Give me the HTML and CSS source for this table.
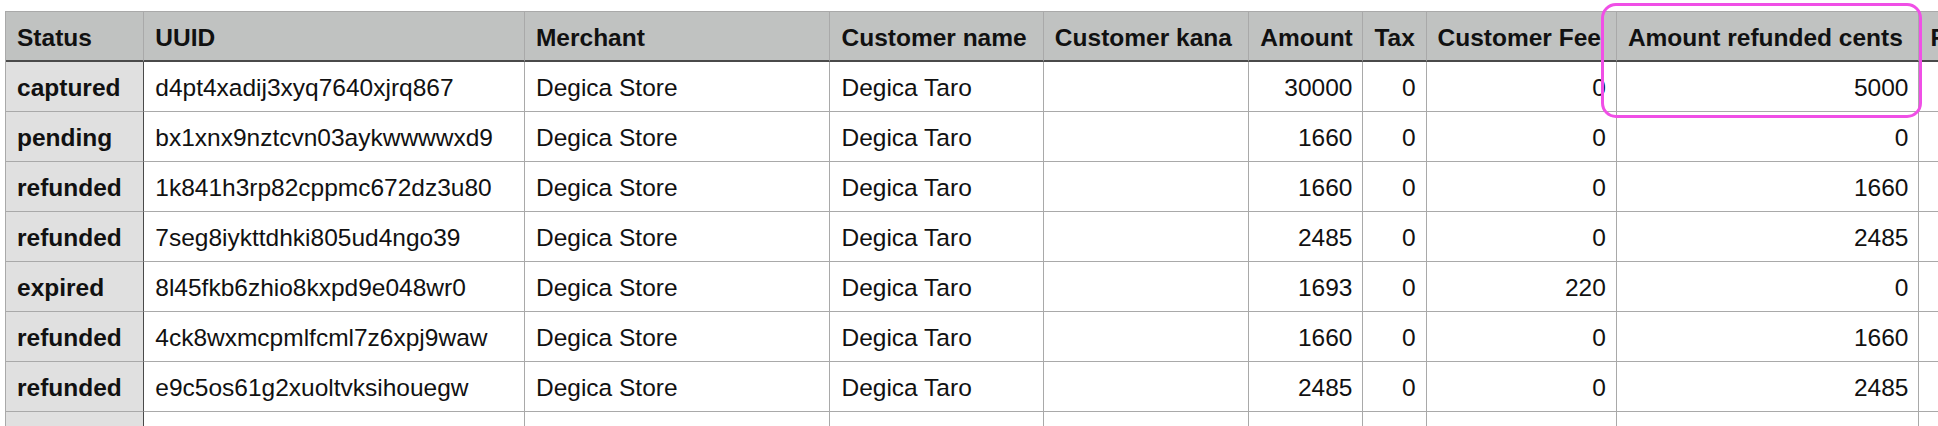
FILE: index.html
```html
<!DOCTYPE html>
<html>
<head>
<meta charset="utf-8">
<link rel="stylesheet" href="styles.css">
</head>
<body>
<div class="sheet">
  <table class="grid">
    <colgroup>
      <col class="c-status"><col class="c-uuid"><col class="c-merchant"><col class="c-cname"><col class="c-ckana"><col class="c-amount"><col class="c-tax"><col class="c-fee"><col class="c-refunded"><col class="c-next">
    </colgroup>
    <thead>
      <tr>
        <th>Status</th><th>UUID</th><th>Merchant</th><th>Customer name</th><th>Customer kana</th><th>Amount</th><th>Tax</th><th>Customer Fee</th><th>Amount refunded cents</th><th>Refunded at</th>
      </tr>
    </thead>
    <tbody>
      <tr><th>captured</th><td>d4pt4xadij3xyq7640xjrq867</td><td>Degica Store</td><td>Degica Taro</td><td></td><td class="num">30000</td><td class="num">0</td><td class="num">0</td><td class="num">5000</td><td></td></tr>
      <tr><th>pending</th><td>bx1xnx9nztcvn03aykwwwwxd9</td><td>Degica Store</td><td>Degica Taro</td><td></td><td class="num">1660</td><td class="num">0</td><td class="num">0</td><td class="num">0</td><td></td></tr>
      <tr><th>refunded</th><td>1k841h3rp82cppmc672dz3u80</td><td>Degica Store</td><td>Degica Taro</td><td></td><td class="num">1660</td><td class="num">0</td><td class="num">0</td><td class="num">1660</td><td></td></tr>
      <tr><th>refunded</th><td>7seg8iykttdhki805ud4ngo39</td><td>Degica Store</td><td>Degica Taro</td><td></td><td class="num">2485</td><td class="num">0</td><td class="num">0</td><td class="num">2485</td><td></td></tr>
      <tr><th>expired</th><td>8l45fkb6zhio8kxpd9e048wr0</td><td>Degica Store</td><td>Degica Taro</td><td></td><td class="num">1693</td><td class="num">0</td><td class="num">220</td><td class="num">0</td><td></td></tr>
      <tr><th>refunded</th><td>4ck8wxmcpmlfcml7z6xpj9waw</td><td>Degica Store</td><td>Degica Taro</td><td></td><td class="num">1660</td><td class="num">0</td><td class="num">0</td><td class="num">1660</td><td></td></tr>
      <tr><th>refunded</th><td>e9c5os61g2xuoltvksihouegw</td><td>Degica Store</td><td>Degica Taro</td><td></td><td class="num">2485</td><td class="num">0</td><td class="num">0</td><td class="num">2485</td><td></td></tr>
      <tr><th></th><td></td><td></td><td></td><td></td><td class="num"></td><td class="num"></td><td class="num"></td><td class="num"></td><td></td></tr>
    </tbody>
  </table>
  <div class="highlight"></div>
</div>
</body>
</html>
```

FILE: styles.css
```css
html, body {
  margin: 0;
  padding: 0;
  background: #ffffff;
  overflow: hidden;
}

body {
  font-family: "Liberation Sans", Arial, Helvetica, sans-serif;
  color: #111111;
}

.sheet {
  position: relative;
  padding: 11px 0 0 5px;
  width: 2400px;
}

.grid {
  border-collapse: separate;
  border-spacing: 0;
  table-layout: fixed;
  width: 2195px;
  border-top: 1px solid #a9a9a9;
  border-left: 1px solid #a9a9a9;
  font-size: 24.5px;
}

.c-status { width: 138px; }
.c-uuid { width: 380px; }
.c-merchant { width: 305px; }
.c-cname { width: 213px; }
.c-ckana { width: 205px; }
.c-amount { width: 114px; }
.c-tax { width: 63px; }
.c-fee { width: 190px; }
.c-refunded { width: 302px; }
.c-next { width: 280px; }

.grid th,
.grid td {
  padding: 3px 10px 0 11px;
  border-right: 1px solid #a9a9a9;
  border-bottom: 1px solid #a9a9a9;
  white-space: nowrap;
  overflow: visible;
  text-align: left;
  vertical-align: middle;
  height: 50px;
  box-sizing: border-box;
}

.grid td {
  font-weight: normal;
}

.grid thead th {
  background: #c0c2c1;
  font-weight: bold;
  height: 50px;
  border-bottom: 2px solid #4a4a4a;
}

.grid tbody th {
  background: #e0e0e0;
  font-weight: bold;
  border-right: 1px solid #4a4a4a;
}

.grid td.num {
  text-align: right;
}

.highlight {
  position: absolute;
  left: 1601px;
  top: 3px;
  width: 321px;
  height: 115px;
  box-sizing: border-box;
  border: 3px solid #f04fe6;
  border-radius: 15px;
  pointer-events: none;
}
```
